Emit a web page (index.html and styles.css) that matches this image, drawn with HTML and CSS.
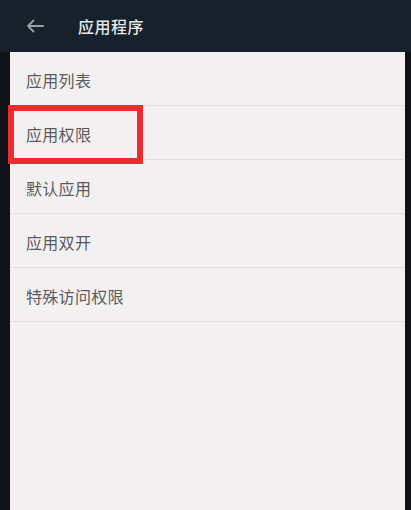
FILE: index.html
```html
<!DOCTYPE html>
<html lang="zh">
<head>
<meta charset="utf-8">
<title>应用程序</title>
<link rel="stylesheet" href="styles.css">
</head>
<body>
<div class="phone">
  <div class="screen">
    <header class="topbar">
      <svg class="back" width="18" height="14" viewBox="0 0 18 14">
        <path d="M17 7H2M7.5 1.5L2 7l5.5 5.5" fill="none" stroke="#9aa1aa" stroke-width="1.8" stroke-linecap="round" stroke-linejoin="round"/>
      </svg>
      <span class="title">应用程序</span>
    </header>
    <ul class="list">
      <li class="item">应用列表</li>
      <li class="item">应用权限</li>
      <li class="item">默认应用</li>
      <li class="item">应用双开</li>
      <li class="item">特殊访问权限</li>
    </ul>
  </div>
  <div class="highlight"></div>
</div>
</body>
</html>
```
FILE: styles.css
```css
* { box-sizing: border-box; }
html, body {
  margin: 0;
  padding: 0;
  height: 100%;
  background: #111418;
  font-family: "Noto Sans CJK SC", "Noto Sans", sans-serif;
}
.phone {
  position: relative;
  height: 510px;
  padding: 0 6px 0 10px;
  background: #10141a;
}
.screen {
  height: 100%;
  background: #f2f0f1;
  display: flex;
  flex-direction: column;
}
.topbar {
  height: 52px;
  margin: 0 -6px 0 -10px;
  padding-left: 26px;
  background: #17212c;
  display: flex;
  align-items: center;
  gap: 34px;
}
.back { flex: none; }
.title {
  color: #e6e7e9;
  font-size: 16px;
  font-weight: 500;
  letter-spacing: 0.5px;
}
.list {
  list-style: none;
  margin: 0;
  padding: 0;
}
.item {
  height: 54px;
  border-bottom: 1px solid #e2dfe0;
  display: flex;
  align-items: center;
  padding-left: 16px;
  padding-top: 2px;
  color: #5b5b5d;
  font-size: 16px;
  letter-spacing: 0.3px;
}
.highlight {
  position: absolute;
  left: 8px;
  top: 105px;
  width: 135px;
  height: 59px;
  border: 6px solid #ee2b2f;
}
```
